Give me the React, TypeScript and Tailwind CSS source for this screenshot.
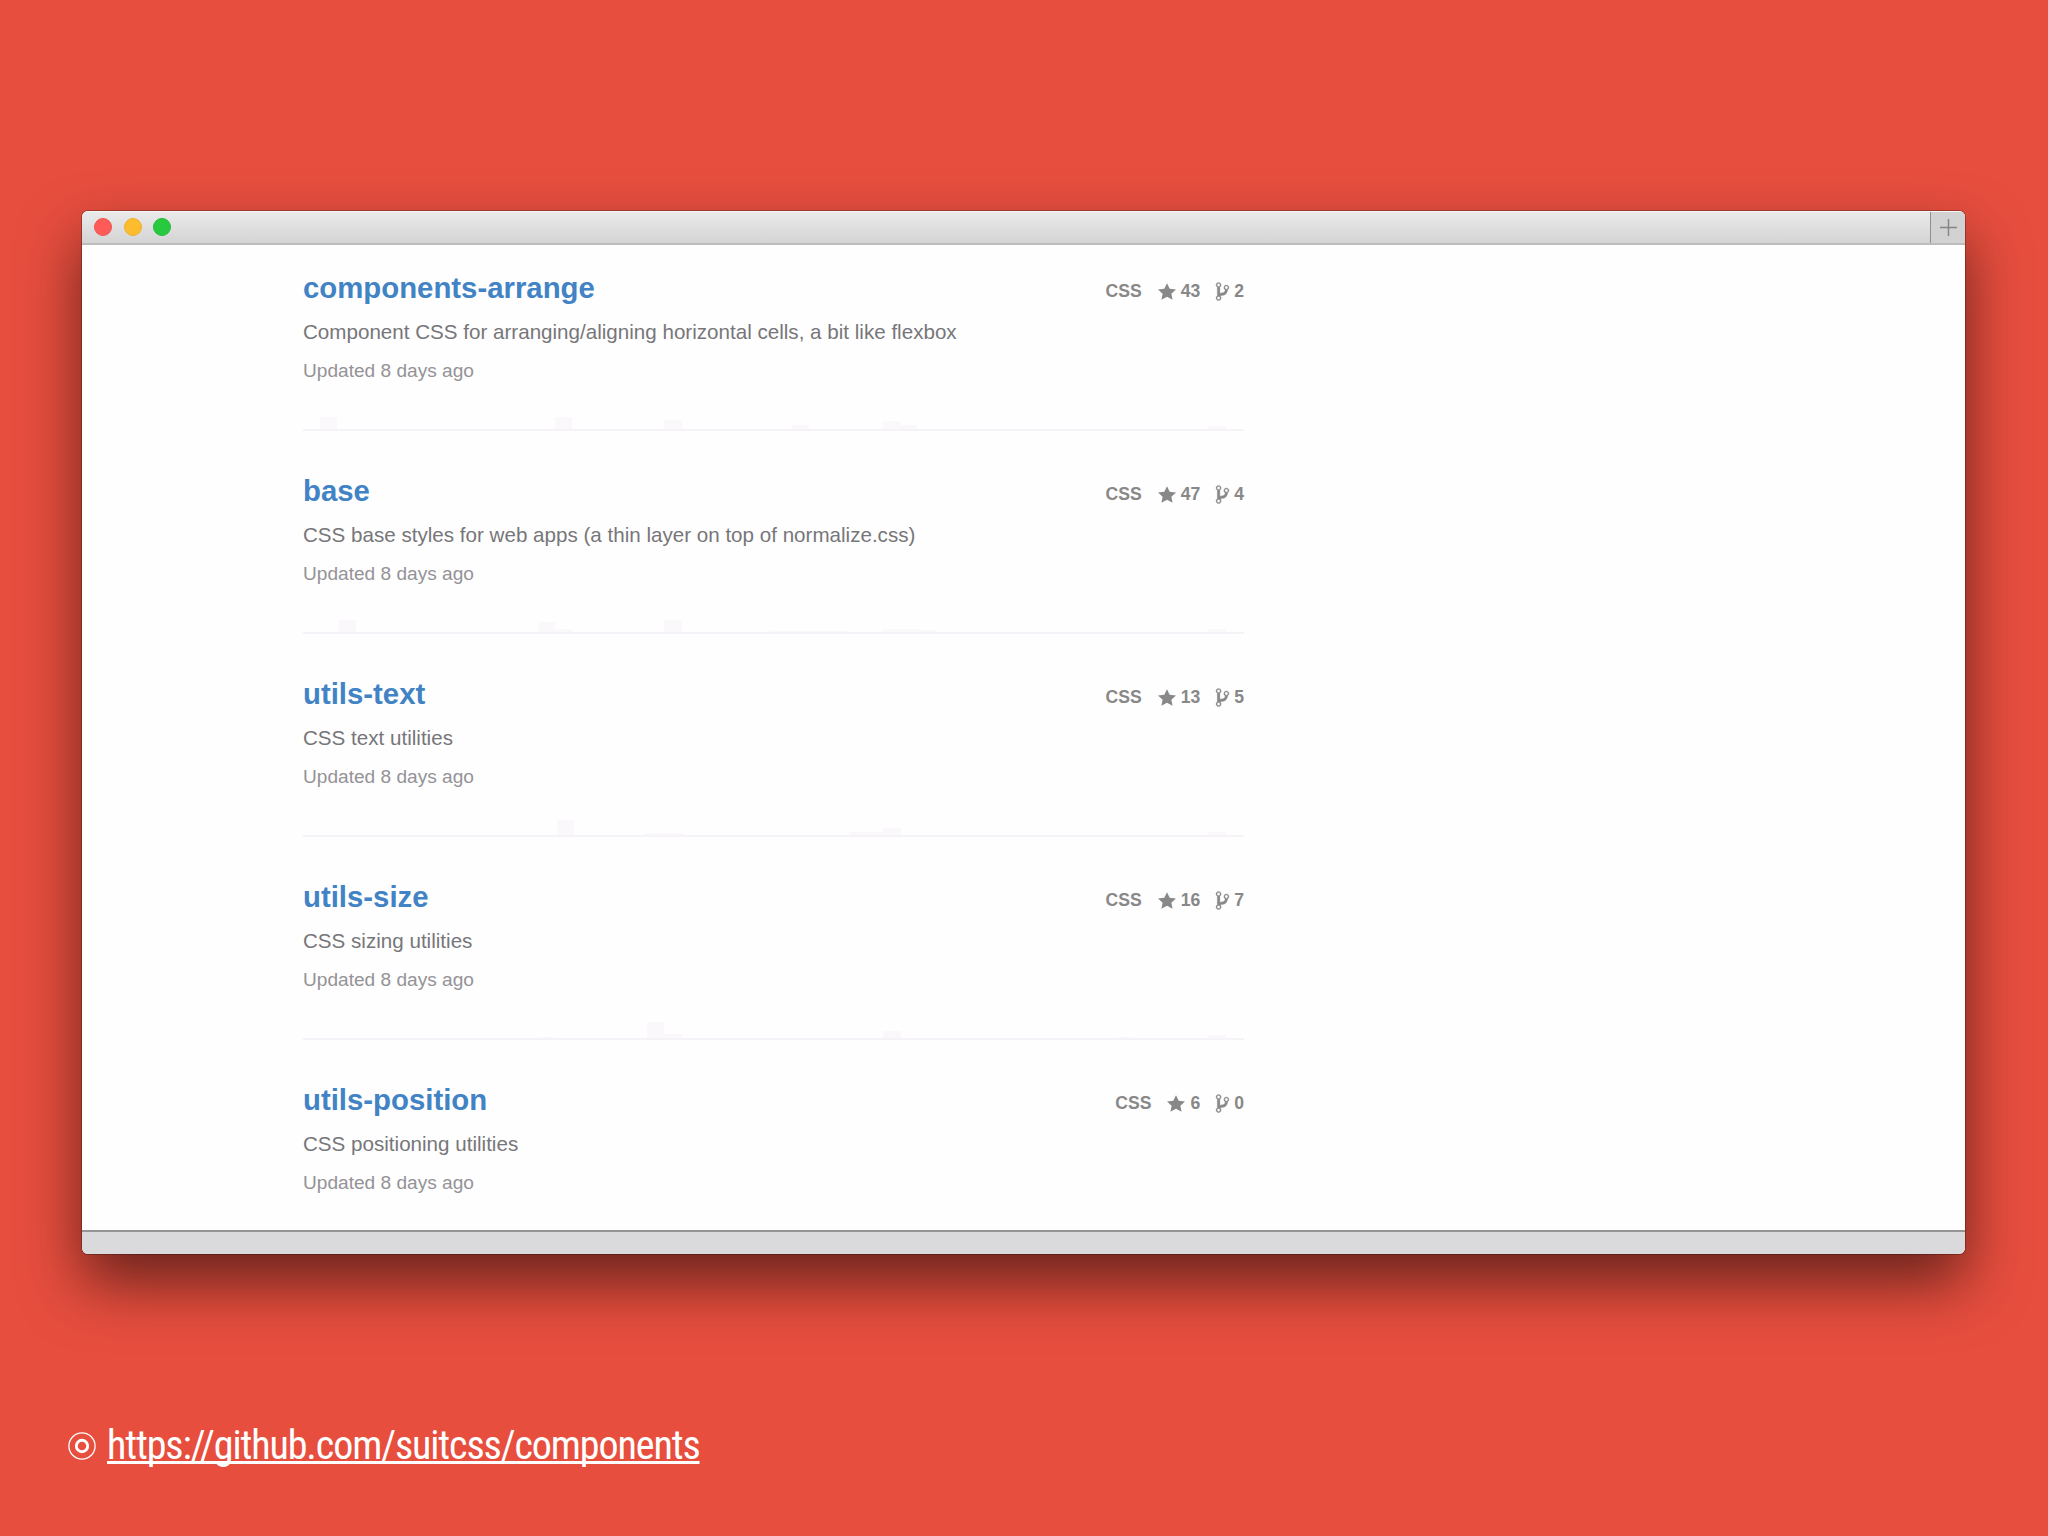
import React, { FC } from "react";

type Bar = [x: number, width: number, height: number];

interface Repo {
  name: string;
  description: string;
  stars: number;
  forks: number;
  activity: Bar[];
}

const REPOS: Repo[] = [
  {
    name: "components-arrange",
    description: "Component CSS for arranging/aligning horizontal cells, a bit like flexbox",
    stars: 43,
    forks: 2,
    activity: [[17, 17, 12], [252, 17, 12], [361, 18, 9], [489, 17, 4], [580, 17, 8], [597, 17, 4], [905, 18, 3]],
  },
  {
    name: "base",
    description: "CSS base styles for web apps (a thin layer on top of normalize.css)",
    stars: 47,
    forks: 4,
    activity: [[36, 17, 12], [236, 16, 10], [252, 17, 3], [361, 18, 12], [467, 78, 1], [580, 36, 3], [616, 18, 2], [905, 18, 3]],
  },
  {
    name: "utils-text",
    description: "CSS text utilities",
    stars: 13,
    forks: 5,
    activity: [[254, 17, 15], [342, 38, 2], [546, 34, 3], [580, 18, 7], [905, 18, 3]],
  },
  {
    name: "utils-size",
    description: "CSS sizing utilities",
    stars: 16,
    forks: 7,
    activity: [[237, 15, 1], [344, 17, 16], [361, 18, 4], [580, 18, 7], [814, 17, 1], [905, 18, 3]],
  },
  {
    name: "utils-position",
    description: "CSS positioning utilities",
    stars: 6,
    forks: 0,
    activity: [],
  },
];

const StarIcon: FC = () => (
  <svg width="18" height="17" viewBox="0 1 14 13" fill="currentColor">
    <path d="M14 6l-4.9-.64L7 1 4.9 5.36 0 6l3.6 3.26L2.67 14 7 11.67 11.33 14l-.93-4.74L14 6z" />
  </svg>
);

const BranchIcon: FC = () => (
  <svg width="13" height="19" viewBox="0 1 10 14" fill="currentColor" stroke="currentColor" strokeWidth="0.25" className="overflow-visible">
    <path d="M10 5c0-1.11-.89-2-2-2a1.993 1.993 0 0 0-1 3.72v.3c-.02.52-.23.98-.63 1.38-.4.4-.86.61-1.38.63-.83.02-1.48.16-2 .45V4.72a1.993 1.993 0 0 0-1-3.72C.88 1 0 1.89 0 3a2 2 0 0 0 1 1.72v6.56c-.59.35-1 .99-1 1.72 0 1.11.89 2 2 2 1.11 0 2-.89 2-2 0-.53-.2-1-.53-1.36.09-.06.48-.41.59-.47.25-.11.56-.17.94-.17 1.05-.05 1.95-.45 2.75-1.25S8.95 7.77 9 6.73h-.02C9.59 6.37 10 5.73 10 5zM2 1.8c.66 0 1.2.55 1.2 1.2 0 .65-.55 1.2-1.2 1.2C1.35 4.2.8 3.65.8 3c0-.65.55-1.2 1.2-1.2zm0 12.41c-.66 0-1.2-.55-1.2-1.2 0-.65.55-1.2 1.2-1.2.65 0 1.2.55 1.2 1.2 0 .65-.55 1.2-1.2 1.2zm6-8c-.66 0-1.2-.55-1.2-1.2 0-.65.55-1.2 1.2-1.2.65 0 1.2.55 1.2 1.2 0 .65-.55 1.2-1.2 1.2z" />
  </svg>
);

const TargetIcon: FC = () => (
  <svg width="28" height="28" viewBox="0 0 28 28" fill="none" stroke="currentColor">
    <circle cx="14" cy="14" r="13.1" strokeWidth="1.3" />
    <circle cx="14" cy="14" r="5.7" strokeWidth="2.9" />
  </svg>
);

const RepoItem: FC<{ repo: Repo }> = ({ repo }) => {
  return (
    <li className="mb-[42px]">
      <div className="flex justify-between">
        <h3 className="text-[29.35px] leading-9 font-bold text-[#4183c4]">{repo.name}</h3>
        <div className="flex items-center pt-1.5 text-[17.6px] leading-[30px] font-bold text-[#888888]">
          <span>CSS</span>
          <span className="ml-4 flex items-center gap-[5px]">
            <StarIcon />
            {repo.stars}
          </span>
          <span className="ml-4 flex items-center gap-[5px]">
            <BranchIcon />
            {repo.forks}
          </span>
        </div>
      </div>
      <p className="mt-[11px] text-[20.6px] leading-[30px] text-[#77767a]">{repo.description}</p>
      <p className="mt-2.5 text-[19.1px] leading-7 text-[#949397]">Updated 8 days ago</p>
      <div className="border-b-2 border-[#f5f3f7]">
        <svg className="block" width="940" height="44" viewBox="0 0 940 44" fill="#faf8fb">
          {repo.activity.map(([x, width, height]) => (
            <rect key={x} x={x} y={44 - height} width={width} height={height} />
          ))}
        </svg>
      </div>
    </li>
  );
};

const BrowserWindow: FC<{ children: React.ReactNode }> = ({ children }) => {
  return (
    <div className="flex h-[1043px] w-[1883px] flex-col overflow-hidden rounded-[6px] bg-[#fefefe] shadow-[0_0_0_1px_rgba(0,0,0,0.25),0_29px_60px_rgba(0,0,0,0.55)]">
      <div className="flex h-[34px] shrink-0 border-t border-b-2 border-t-[#f6f6f6] border-b-[#bdbdbd] bg-linear-to-b from-[#eaeaea] to-[#d4d4d4]">
        <div className="flex flex-1 items-center gap-[11.5px] pb-px pl-3">
          <span className="size-[18px] rounded-full border border-[#ef5450] bg-[#fc5b57]" />
          <span className="size-[18px] rounded-full border border-[#efb02b] bg-[#fdbc2e]" />
          <span className="size-[18px] rounded-full border border-[#23bb37] bg-[#27c93f]" />
        </div>
        <div className="flex w-[35px] items-center justify-center border-l border-[#8f8f8f] bg-[#d2d2d3] pb-px">
          <svg width="17" height="17" viewBox="0 0 17 17" stroke="#858585" strokeWidth="1.5">
            <path d="M8.5 0v17M0 8.5h17" />
          </svg>
        </div>
      </div>
      <div className="flex-1 overflow-hidden">{children}</div>
      <div className="h-6 shrink-0 border-t-2 border-[#969497] bg-[#dad9db]" />
    </div>
  );
};

const App: FC = () => {
  return (
    <div className="flex h-[1536px] w-[2048px] flex-col overflow-hidden bg-[#e74e3e] pt-[211px] pl-[82px]">
      <BrowserWindow>
        <ul className="ml-[221px] w-[941px] pt-[25px] font-['Liberation_Sans',Arial,sans-serif]">
          {REPOS.map((repo) => (
            <RepoItem key={repo.name} repo={repo} />
          ))}
        </ul>
      </BrowserWindow>
      <div className="mt-[164px] -ml-3.5 flex h-14 items-center gap-[11px] text-white">
        <TargetIcon />
        <a
          href="#"
          className="font-['Roboto_Condensed',Roboto,sans-serif] text-[40px] leading-none tracking-[-1.1px] whitespace-nowrap underline decoration-[2.5px] underline-offset-2 [text-decoration-skip-ink:none]"
        >
          https://github.com/suitcss/components
        </a>
      </div>
    </div>
  );
};

export default App;
